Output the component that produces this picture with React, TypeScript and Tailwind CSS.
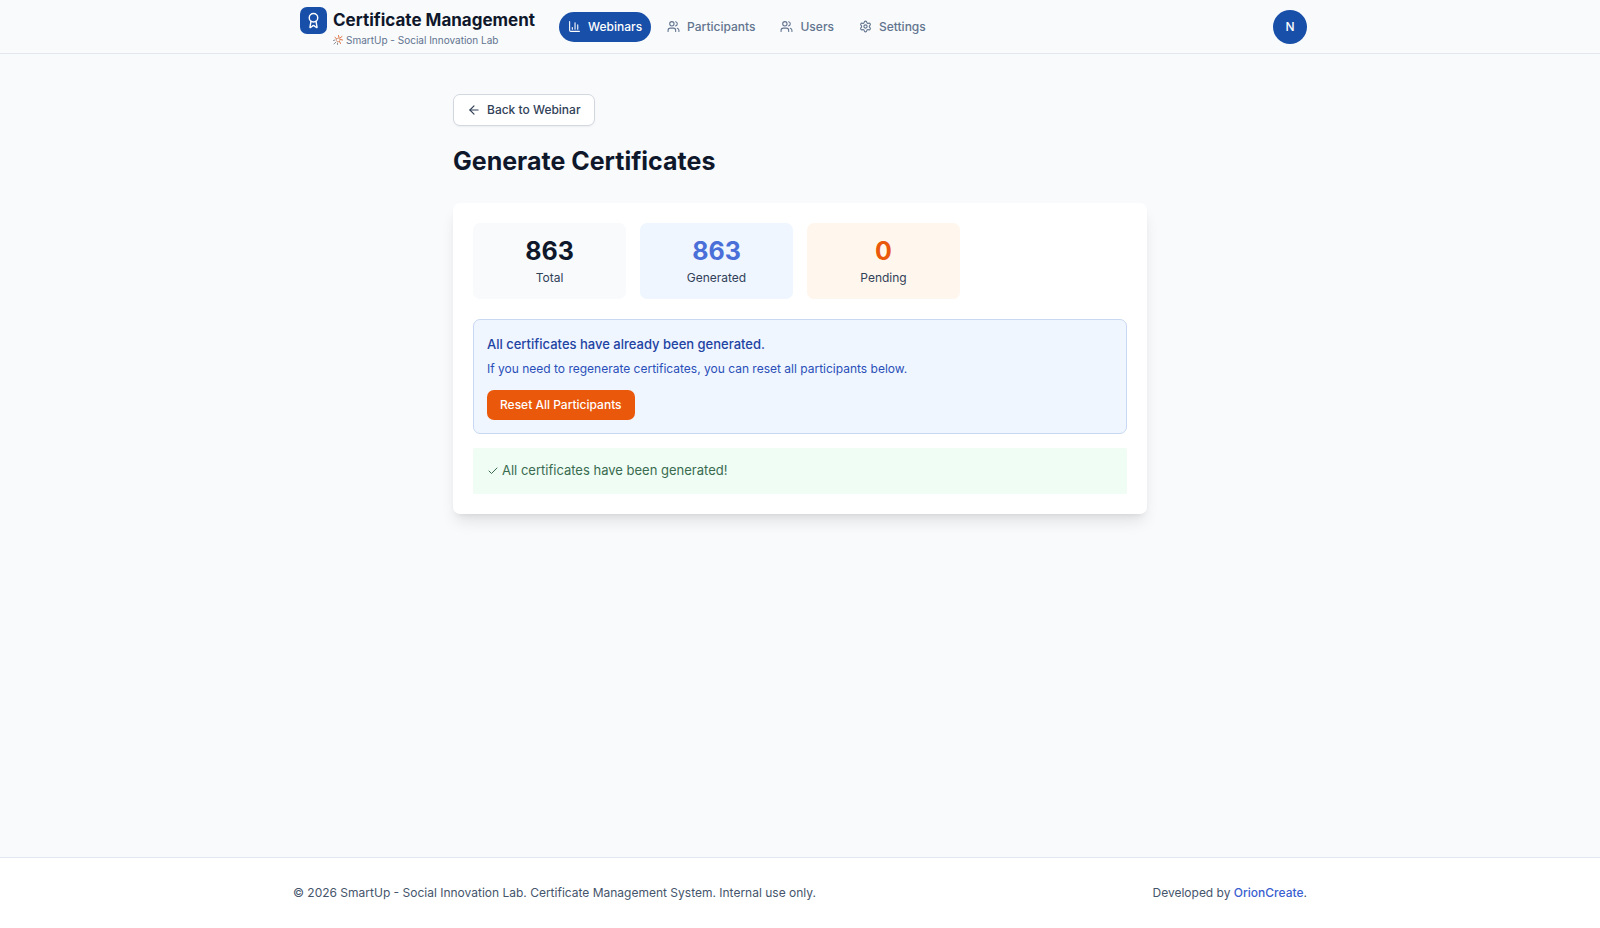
import { ArrowLeft, Award, BarChart3, Check, Settings, Users } from "lucide-react"

const navItems = [
  { label: "Webinars", icon: BarChart3, active: true },
  { label: "Participants", icon: Users, active: false },
  { label: "Users", icon: Users, active: false },
  { label: "Settings", icon: Settings, active: false },
]

const stats = [
  { label: "Total", value: 863, box: "bg-slate-50", text: "text-slate-900" },
  { label: "Generated", value: 863, box: "bg-[#eff6ff]", text: "text-[#4a6fd8]" },
  { label: "Pending", value: 0, box: "bg-[#fff6ed]", text: "text-[#ea580c]" },
]

function SparkIcon() {
  return (
    <svg viewBox="0 0 20 20" className="size-[10px]" fill="none" strokeWidth="2" strokeLinecap="round" aria-hidden="true">
      <path d="M11 1l1 4M18 3l-4 3M19 10l-4-1M15 17l-2-4M4 5l3 2" stroke="#e0703c" />
      <path d="M8 7l5-1 1 5-4 3-3-3z" stroke="#e2a183" />
      <path d="M2 18l4-4M1 11l3-1M9 19l0-3" stroke="#8b8f98" />
    </svg>
  )
}

function Header() {
  return (
    <header className="border-b border-[#e2e6ef] bg-slate-50">
      <div className="mx-auto flex h-[53px] w-full max-w-[1014px] items-center justify-between">
        <div className="flex items-center">
          <a href="#" className="ml-[7px] flex h-10 items-start gap-[6px]">
            <span className="flex size-[27px] items-center justify-center rounded-[7px] bg-[#184fa8] text-white">
              <Award className="size-[17px]" strokeWidth={2} />
            </span>
            <span className="flex flex-col">
              <span className="text-[17px] leading-[26px] font-bold text-slate-900">Certificate Management</span>
              <span className="flex items-center gap-[3px] text-[10px] leading-[14px] text-slate-500">
                <SparkIcon />
                SmartUp - Social Innovation Lab
              </span>
            </span>
          </a>
          <nav className="ml-6 flex items-center gap-[7px]">
            {navItems.map(({ label, icon: Icon, active }) => (
              <a
                key={label}
                href="#"
                className={`flex h-[30px] items-center gap-[7px] rounded-full px-[9px] text-[12px] font-medium ${
                  active ? "bg-[#184fa8] text-white" : "text-slate-500"
                }`}
              >
                <Icon className="size-[13px]" />
                {label}
              </a>
            ))}
          </nav>
        </div>
        <button
          type="button"
          aria-label="Account"
          className="size-[34px] rounded-full bg-[#184fa8] text-[12px] font-medium text-white"
        >
          N
        </button>
      </div>
    </header>
  )
}

export default function App() {
  return (
    <div className="flex min-h-screen flex-col bg-slate-50 font-['Inter',sans-serif] text-slate-900">
      <Header />

      <main className="mx-auto w-full max-w-[694px] flex-1 pt-10">
        <button
          type="button"
          className="flex h-8 items-center gap-[6px] rounded-[7px] border border-[#d3d8e0] bg-white px-[13px] text-[12px] font-medium text-slate-700 shadow-xs"
        >
          <ArrowLeft className="size-[14px]" />
          Back to Webinar
        </button>

        <h1 className="mt-5 text-[25px] leading-[31px] font-bold">Generate Certificates</h1>

        <section className="mt-[26px] rounded-[7px] bg-white p-5 shadow-lg">
          {/* Stats */}
          <div className="grid grid-cols-4 gap-[14px]">
            {stats.map((stat) => (
              <div key={stat.label} className={`rounded-[7px] p-3 text-center ${stat.box}`}>
                <div className={`text-[25px] leading-[33px] font-bold ${stat.text}`}>{stat.value}</div>
                <div className="text-[12px] leading-[19px] text-slate-700">{stat.label}</div>
              </div>
            ))}
          </div>

          {/* Regenerate notice */}
          <div className="mt-5 rounded-[7px] border border-[#c9d8f2] bg-[#eff6ff] p-[13px]">
            <p className="text-[13px] leading-[22px] font-medium text-[#1e43a3]">
              All certificates have already been generated.
            </p>
            <p className="mt-1 text-[12px] leading-[20px] text-[#2a4fb8]">
              If you need to regenerate certificates, you can reset all participants below.
            </p>
            <button
              type="button"
              className="mt-[11px] h-[30px] rounded-[7px] bg-[#ea580c] px-[13px] text-[12px] font-medium text-white"
            >
              Reset All Participants
            </button>
          </div>

          <p className="mt-[14px] flex h-[46px] items-center gap-[3px] rounded-[2px] bg-[#effdf4] px-[14px] text-[13px] text-[#3a6b50]">
            <Check className="size-[12px]" strokeWidth={2} />
            All certificates have been generated!
          </p>
        </section>
      </main>

      <footer className="border-t border-slate-200 bg-white">
        <div className="mx-auto flex h-[70px] w-full max-w-[1014px] items-center justify-between text-[12px] text-slate-600">
          <p>© 2026 SmartUp - Social Innovation Lab. Certificate Management System. Internal use only.</p>
          <p>
            Developed by{" "}
            <a href="#" className="font-medium text-[#3a5fd0]">
              OrionCreate
            </a>
            .
          </p>
        </div>
      </footer>
    </div>
  )
}
